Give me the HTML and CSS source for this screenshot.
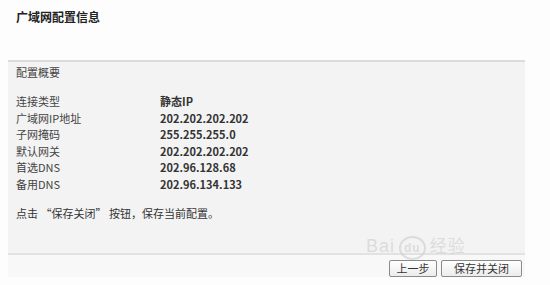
FILE: index.html
```html
<!DOCTYPE html>
<html lang="zh-CN">
<head>
<meta charset="utf-8">
<link rel="stylesheet" href="styles.css">
</head>
<body>
<div class="page">
  <div class="title">广域网配置信息</div>
  <div class="panel">
    <div class="panel-head">配置概要</div>
    <div class="rows">
      <div class="row"><span class="label">连接类型</span><span class="value">静态IP</span></div>
      <div class="row"><span class="label">广域网IP地址</span><span class="value">202.202.202.202</span></div>
      <div class="row"><span class="label">子网掩码</span><span class="value">255.255.255.0</span></div>
      <div class="row"><span class="label">默认网关</span><span class="value">202.202.202.202</span></div>
      <div class="row"><span class="label">首选DNS</span><span class="value">202.96.128.68</span></div>
      <div class="row"><span class="label">备用DNS</span><span class="value">202.96.134.133</span></div>
    </div>
    <div class="note">点击 “保存关闭” 按钮，保存当前配置。</div>
  </div>
  <div class="actions">
    <button class="btn btn-prev">上一步</button>
    <button class="btn btn-save">保存并关闭</button>
  </div>
  <div class="watermark"><span class="wm-bai">Bai</span><span class="wm-du">du</span><span class="wm-jy">经验</span></div>
</div>
</body>
</html>
```
FILE: styles.css
```css
html, body {
  margin: 0;
  padding: 0;
  background: #fdfdfd;
}
body {
  font-family: "Noto Sans CJK SC", "Liberation Sans", sans-serif;
  font-size: 11px;
  color: #3a3a3a;
}
.page {
  position: relative;
  width: 550px;
  height: 285px;
  overflow: hidden;
}
.title {
  padding: 9px 0 0 16px;
  height: 40px;
  font-size: 12px;
  font-weight: bold;
  color: #222;
  line-height: 16px;
}
.panel {
  margin: 11px 0 0 8px;
  width: 517px;
  height: 195px;
  border-top: 2px solid #dcdcdc;
  border-bottom: 2px solid #e2e2e2;
  background: #f3f3f3;
  box-sizing: border-box;
}
.panel-head {
  padding: 2px 0 0 8px;
  height: 28px;
  line-height: 16px;
  color: #444;
}
.rows {
  padding: 1px 0 0 8px;
}
.row {
  display: flex;
  height: 16.6px;
  line-height: 16px;
}
.label {
  width: 144px;
  color: #444;
}
.value {
  font-weight: bold;
  color: #333;
}
.note {
  padding: 12px 0 0 8px;
  line-height: 16px;
  color: #333;
}
.actions {
  margin-left: 8px;
  width: 517px;
  height: 22px;
  background: #f8f8f8;
  display: flex;
  justify-content: flex-end;
  align-items: flex-end;
  gap: 4px;
  padding-right: 3px;
  box-sizing: border-box;
}
.btn {
  font-family: "Noto Sans CJK SC", sans-serif;
  font-size: 11px;
  height: 17px;
  line-height: 13px;
  padding: 0;
  border: 1px solid #8a8a8a;
  border-radius: 2px;
  background: linear-gradient(#ffffff, #ececec);
  color: #333;
}
.btn-prev { width: 48px; }
.btn-save { width: 81px; }
.watermark {
  position: absolute;
  left: 366px;
  top: 236px;
  font-family: "Liberation Sans", "Noto Sans CJK SC", sans-serif;
  font-size: 18px;
  color: rgba(200, 200, 200, 0.55);
  line-height: 20px;
  letter-spacing: 1px;
  pointer-events: none;
}
.wm-du {
  display: inline-block;
  font-size: 12px;
  font-weight: bold;
  border: 2px solid rgba(200, 200, 200, 0.55);
  border-radius: 50%;
  padding: 0 3px;
  margin: 0 4px;
}
.wm-jy { font-size: 17px; }
```
